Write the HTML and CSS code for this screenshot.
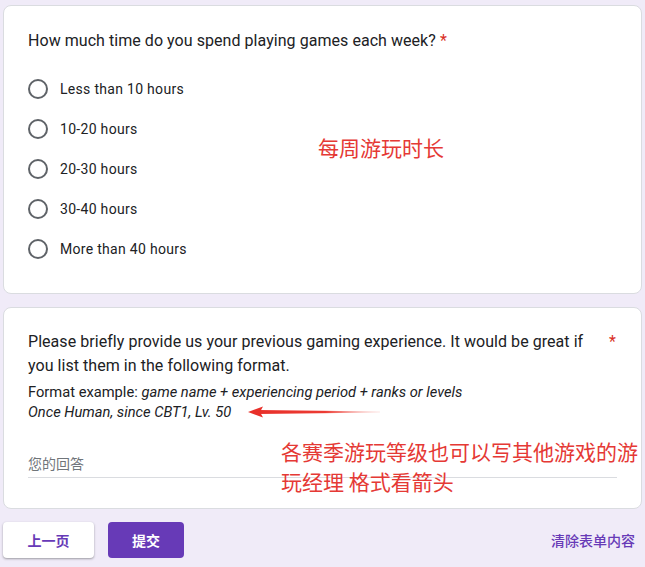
FILE: index.html
```html
<!DOCTYPE html>
<html lang="zh-CN">
<head>
<meta charset="utf-8">
<link rel="stylesheet" href="styles.css">
</head>
<body>
<div class="page">
  <section class="card card-one">
    <div class="q-title">How much time do you spend playing games each week? <span class="req">*</span></div>
    <div class="options">
      <div class="opt"><span class="radio"></span><span class="opt-label">Less than 10 hours</span></div>
      <div class="opt"><span class="radio"></span><span class="opt-label">10-20 hours</span></div>
      <div class="opt"><span class="radio"></span><span class="opt-label">20-30 hours</span></div>
      <div class="opt"><span class="radio"></span><span class="opt-label">30-40 hours</span></div>
      <div class="opt"><span class="radio"></span><span class="opt-label">More than 40 hours</span></div>
    </div>
    <div class="note note-one">每周游玩时长</div>
  </section>

  <section class="card card-two">
    <div class="q-head">
      <div class="q-text">Please briefly provide us your previous gaming experience. It would be great if you list them in the following format.</div>
      <span class="req req-side">*</span>
    </div>
    <div class="q-desc">
      <div>Format example: <em>game name + experiencing period + ranks or levels</em></div>
      <div><em>Once Human, since CBT1, Lv. 50</em></div>
    </div>
    <div class="answer">您的回答</div>
    <svg class="arrow" width="136" height="16" viewBox="0 0 136 16">
      <defs>
        <linearGradient id="fade" x1="0" y1="0" x2="1" y2="0">
          <stop offset="0" stop-color="#e8302a"/>
          <stop offset="0.55" stop-color="#ec3b33"/>
          <stop offset="1" stop-color="#f6a09a" stop-opacity="0.25"/>
        </linearGradient>
      </defs>
      <polygon points="12,6 134,7.4 134,8.6 12,10" fill="url(#fade)"/>
      <polygon points="2,8 17,2.5 14,8 17,13.5" fill="#e8302a"/>
    </svg>
    <div class="note note-two">各赛季游玩等级也可以写其他游戏的游<br>玩经理 格式看箭头</div>
  </section>

  <div class="actions">
    <div class="btn-row">
      <button class="btn btn-back">上一页</button>
      <button class="btn btn-submit">提交</button>
    </div>
    <span class="clear">清除表单内容</span>
  </div>
</div>
</body>
</html>
```

FILE: styles.css
```css
* { box-sizing: border-box; }
html, body {
  margin: 0;
  padding: 0;
  background: #f0ebf8;
}
body {
  font-family: Roboto, "Noto Sans CJK SC", sans-serif;
  color: #202124;
  width: 645px;
  height: 567px;
  overflow: hidden;
}
.page {
  padding: 4px 3px 0 3px;
  display: flex;
  flex-direction: column;
}
.card {
  position: relative;
  background: #fff;
  border: 1px solid #dadce0;
  border-radius: 8px;
  padding: 23px 24px 24px 24px;
}
.card-one {
  margin-top: 1px;
}
.q-title {
  font-size: 16px;
  line-height: 24px;
  letter-spacing: 0.05px;
}
.req {
  color: #d93025;
}
.options {
  margin-top: 16px;
  display: flex;
  flex-direction: column;
}
.opt {
  height: 40px;
  display: flex;
  align-items: center;
  gap: 12px;
}
.radio {
  width: 20px;
  height: 20px;
  border: 2px solid #5f6368;
  border-radius: 50%;
  flex: none;
}
.opt-label {
  font-size: 14px;
  letter-spacing: 0.3px;
}
.note {
  position: absolute;
  font-family: "Noto Sans CJK SC", sans-serif;
  color: #e53935;
  font-size: 21px;
  line-height: 30px;
  white-space: nowrap;
}
.note-one {
  left: 314px;
  top: 126px;
}
.card-two {
  margin-top: 13px;
  padding: 22px 24px 30px 24px;
}
.q-head {
  display: flex;
  justify-content: space-between;
  align-items: flex-start;
}
.q-text {
  width: 560px;
  font-size: 16px;
  line-height: 24px;
  letter-spacing: 0.05px;
}
.req-side {
  font-size: 16px;
  line-height: 24px;
  margin-right: 1px;
}
.q-desc {
  margin-top: 4px;
  font-size: 14.7px;
  line-height: 20px;
}
.q-desc em {
  font-style: italic;
}
.answer {
  margin-top: 31px;
  font-family: "Noto Sans CJK SC", sans-serif;
  font-size: 14px;
  line-height: 20px;
  color: #70757a;
  padding-bottom: 4px;
  border-bottom: 1px solid #dadce0;
}
.arrow {
  position: absolute;
  left: 242px;
  top: 96px;
}
.note-two {
  left: 277px;
  top: 128px;
}
.actions {
  margin-top: 13px;
  display: flex;
  justify-content: space-between;
  align-items: center;
}
.btn-row {
  display: flex;
  gap: 14px;
}
.btn {
  height: 36px;
  border: none;
  border-radius: 4px;
  font-family: "Noto Sans CJK SC", sans-serif;
  font-size: 14px;
  font-weight: 700;
  padding: 0;
}
.btn-back {
  width: 91px;
  background: #fff;
  color: #673ab7;
  box-shadow: 0 1px 2px rgba(60, 64, 67, 0.35), 0 1px 3px rgba(60, 64, 67, 0.15);
}
.btn-submit {
  width: 76px;
  background: #673ab7;
  color: #fff;
}
.clear {
  font-family: "Noto Sans CJK SC", sans-serif;
  font-size: 14px;
  font-weight: 500;
  color: #673ab7;
  margin-right: 7px;
}
```
